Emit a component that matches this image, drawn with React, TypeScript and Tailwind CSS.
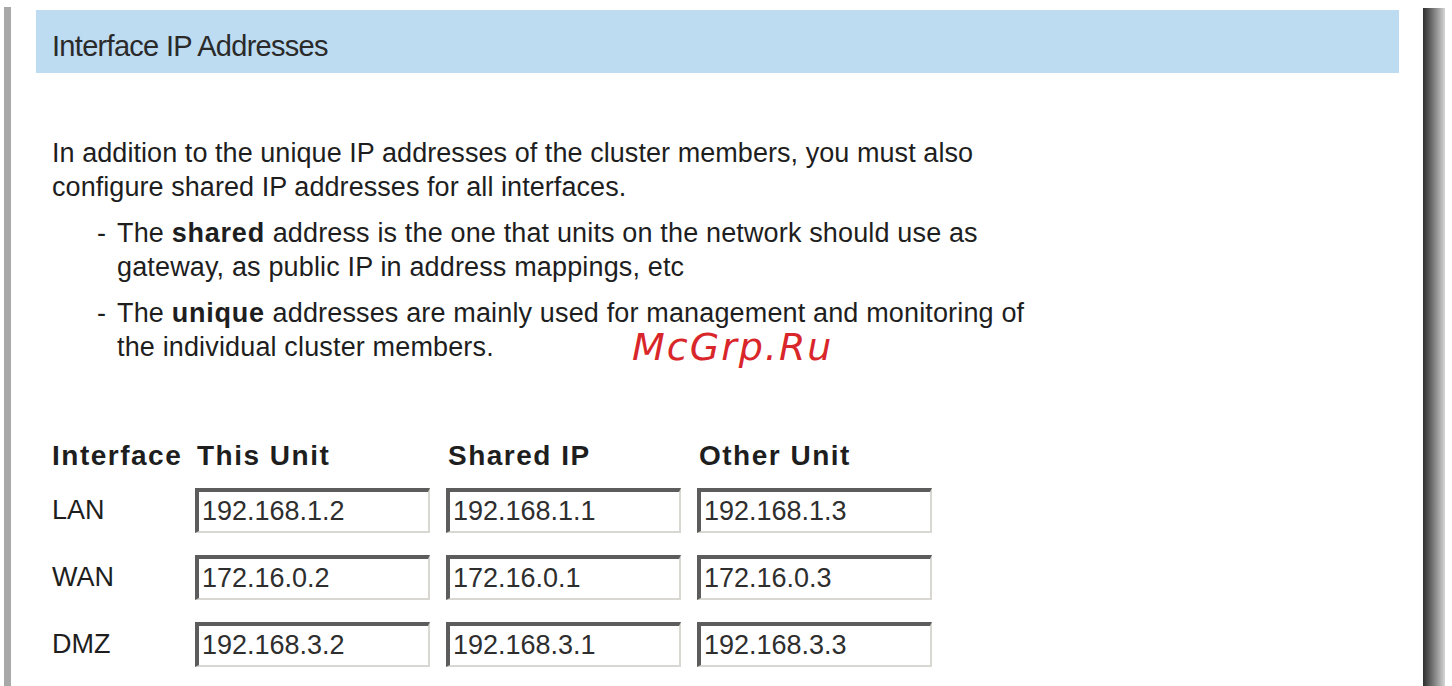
import React from "react";

type Row = { name: string; self: string; shared: string; other: string };

const rows: Row[] = [
  { name: "LAN", self: "192.168.1.2", shared: "192.168.1.1", other: "192.168.1.3" },
  { name: "WAN", self: "172.16.0.2", shared: "172.16.0.1", other: "172.16.0.3" },
  { name: "DMZ", self: "192.168.3.2", shared: "192.168.3.1", other: "192.168.3.3" },
];

function IpBox({ value }: { value: string }) {
  return (
    <div className="box-border h-[45px] w-[235px] border-b-2 border-l-4 border-r-2 border-t-4 border-b-[#d9d7d2] border-l-[#5c5c5c] border-r-[#d9d7d2] border-t-[#5c5c5c] bg-white pl-[3px] text-[27px] leading-[39px] text-[#2e2e2e]">
      {value}
    </div>
  );
}

export default function App() {
  return (
    <div
      className="relative flex h-[686px] w-[1452px] overflow-hidden bg-white text-[#1e1e1e]"
      style={{ fontFamily: '"Liberation Sans", Arial, sans-serif' }}
    >
      {/* left frame rule */}
      <div className="ml-[4px] mt-[7px] w-[7px] bg-[#a8a8a8]" />

      <main className="ml-[25px] w-[1363px] pt-[10px]">
        <div className="h-[63px] bg-[#bddbf1] pl-[16px] pt-[19px] text-[29px] leading-[34px] tracking-[-0.7px] text-[#2a2a2a]">
          Interface IP Addresses
        </div>

        <div className="mt-[63px] pl-[16px] text-[27px] leading-[34px]">
          <p className="whitespace-nowrap tracking-[0.06px]">
            In addition to the unique IP addresses of the cluster members, you must also
            <br />
            configure shared IP addresses for all interfaces.
          </p>
          <ul className="ml-[45px] tracking-[0.15px]">
            <li className="mt-[12px] flex">
              <span className="w-[20px]">-</span>
              <span className="whitespace-nowrap">
                The <b className="tracking-[0.8px]">shared</b> address is the one that units on the network should use as
                <br />
                gateway, as public IP in address mappings, etc
              </span>
            </li>
            <li className="mt-[12px] flex">
              <span className="w-[20px]">-</span>
              <span className="whitespace-nowrap">
                The <b className="tracking-[0.8px]">unique</b> addresses are mainly used for management and monitoring of
                <br />
                the individual cluster members.
              </span>
            </li>
          </ul>

          <div className="mt-[75px] grid grid-cols-[143px_251px_251px_251px] text-[28px] font-bold leading-[34px] tracking-[1.5px]">
            <div>Interface</div>
            <div className="pl-[2px]">This Unit</div>
            <div className="pl-[2px]">Shared IP</div>
            <div className="pl-[2px]">Other Unit</div>
          </div>

          <div className="mt-[15px] flex flex-col gap-[22px]">
            {rows.map((r) => (
              <div key={r.name} className="grid grid-cols-[143px_251px_251px_251px] items-center">
                <div className="text-[27px] leading-[45px]">{r.name}</div>
                <IpBox value={r.self} />
                <IpBox value={r.shared} />
                <IpBox value={r.other} />
              </div>
            ))}
          </div>
        </div>
      </main>

      {/* right frame shadow */}
      <div className="ml-[24px] mt-[8px] w-[22px] bg-linear-to-r from-[#2f2f2f] via-[#7e7e7e] to-[#d6d6d6]" />

      <div
        className="absolute left-[632px] top-[328px] text-[38px] italic leading-[38px] tracking-[2px] text-[#d9262a]"
        style={{ fontFamily: '"DejaVu Sans", sans-serif' }}
      >
        McGrp.Ru
      </div>
    </div>
  );
}
